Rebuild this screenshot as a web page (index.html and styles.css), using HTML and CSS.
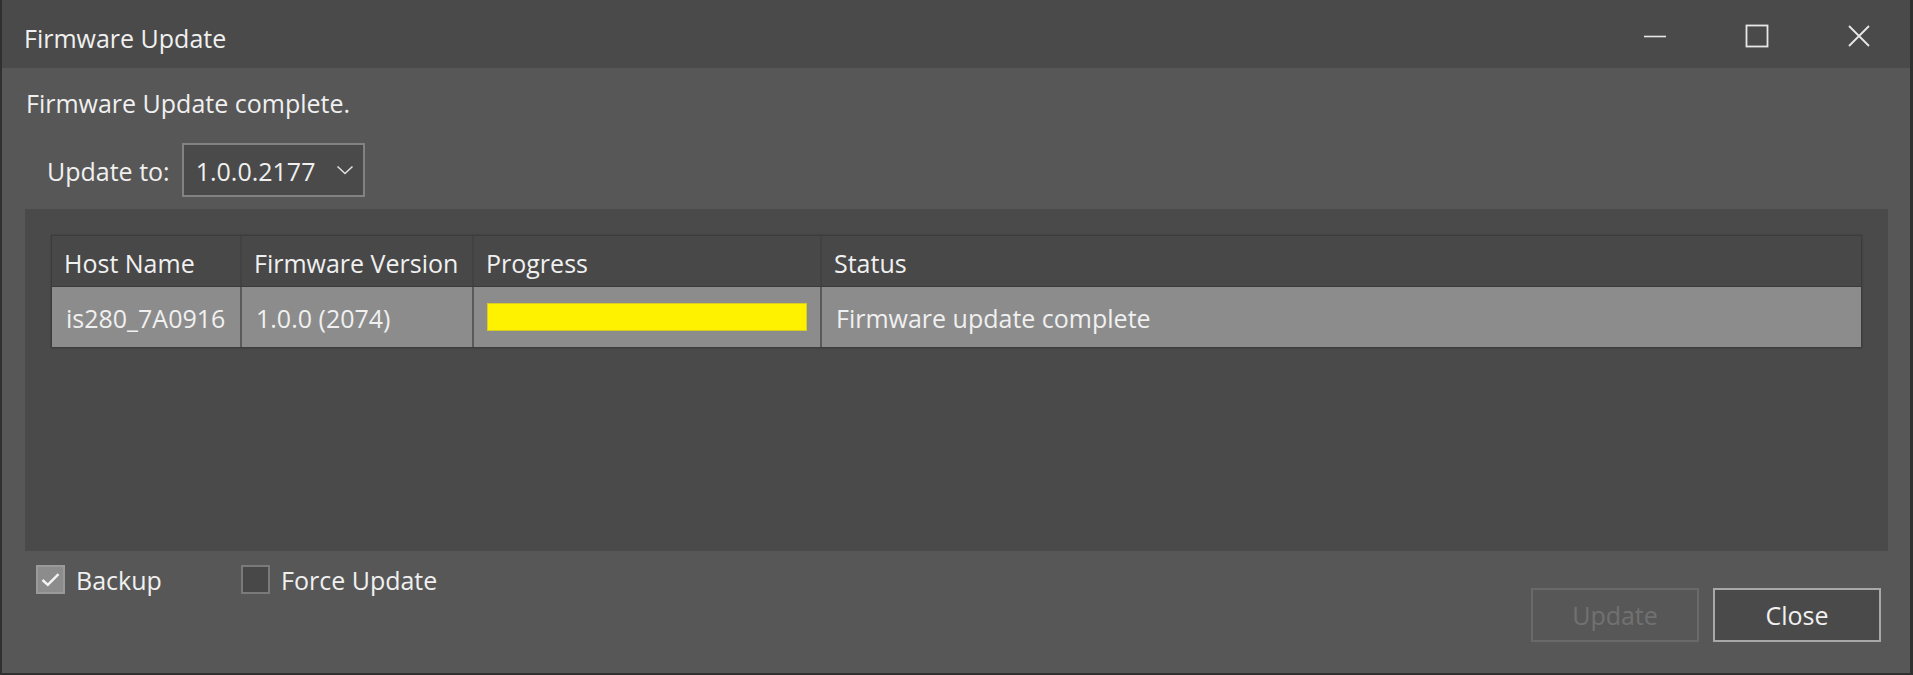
FILE: index.html
```html
<!DOCTYPE html>
<html>
<head>
<meta charset="utf-8">
<title>Firmware Update</title>
<link rel="stylesheet" href="styles.css">
</head>
<body>
<div class="window">
  <div class="titlebar">
    <div class="title">Firmware Update</div>
    <div class="controls">
      <div class="ctl"><svg width="24" height="24" viewBox="0 0 24 24"><line x1="1" y1="12.5" x2="23" y2="12.5" stroke="#e8e8e8" stroke-width="1.6"/></svg></div>
      <div class="ctl"><svg width="24" height="24" viewBox="0 0 24 24"><rect x="1.5" y="1.5" width="21" height="21" fill="none" stroke="#e8e8e8" stroke-width="1.8"/></svg></div>
      <div class="ctl"><svg width="24" height="24" viewBox="0 0 24 24"><path d="M2 2 L22 22 M22 2 L2 22" stroke="#e8e8e8" stroke-width="1.8"/></svg></div>
    </div>
  </div>
  <div class="content">
    <div class="message">Firmware Update complete.</div>
    <div class="update-row">
      <span class="label">Update to:</span>
      <div class="combo">
        <span>1.0.0.2177</span>
        <svg width="18" height="10" viewBox="0 0 18 10"><path d="M1.5 1.5 L9 8.5 L16.5 1.5" fill="none" stroke="#e0e0e0" stroke-width="1.6"/></svg>
      </div>
    </div>
    <div class="panel">
      <div class="grid">
        <div class="row head">
          <div class="cell c1">Host Name</div>
          <div class="cell c2">Firmware Version</div>
          <div class="cell c3">Progress</div>
          <div class="cell c4">Status</div>
        </div>
        <div class="row data">
          <div class="cell c1">is280_7A0916</div>
          <div class="cell c2">1.0.0 (2074)</div>
          <div class="cell c3"><div class="bar"><div class="fill" style="width:100%"></div></div></div>
          <div class="cell c4">Firmware update complete</div>
        </div>
      </div>
    </div>
    <div class="footer">
      <div class="checks">
        <label class="check"><span class="box checked"><svg width="19" height="15" viewBox="0 0 19 15"><path d="M1.5 8 L6.8 12.8 L17.5 2.2" fill="none" stroke="#f4f4f4" stroke-width="2.4"/></svg></span>Backup</label>
        <label class="check"><span class="box"></span>Force Update</label>
      </div>
      <div class="buttons">
        <div class="btn disabled">Update</div>
        <div class="btn primary">Close</div>
      </div>
    </div>
  </div>
</div>
</body>
</html>
```

FILE: styles.css
```css
* { box-sizing: border-box; }
html, body { margin: 0; padding: 0; }
body {
  background: #2d2d2d;
  font-family: "Open Sans", "Noto Sans", sans-serif;
  color: #f0f0f0;
  font-size: 25px;
  line-height: 34px;
}
.window {
  width: 1913px;
  height: 675px;
  background: #575757;
  border-left: 2px solid #303030;
  border-right: 3px solid #303030;
  border-bottom: 2px solid #303030;
  display: flex;
  flex-direction: column;
}
.titlebar {
  height: 68px;
  background: #4a4a4a;
  display: flex;
  align-items: center;
  justify-content: space-between;
  padding-left: 22px;
  flex-shrink: 0;
}
.title { padding-top: 7px; color: #f0f0f0; }
.controls { display: flex; height: 100%; padding-top: 3px; }
.ctl {
  width: 102px;
  height: 100%;
  display: flex;
  align-items: center;
  justify-content: center;
}
.content {
  padding: 0 22px 0 23px;
  display: flex;
  flex-direction: column;
  flex: 1;
}
.message {
  height: 62px;
  padding-top: 18px;
  padding-left: 1px;
}
.update-row {
  display: flex;
  align-items: center;
  padding-left: 22px;
  height: 79px;
  padding-top: 13px;
  padding-bottom: 12px;
}
.label { margin-right: 12px; padding-top: 2px; }
.combo {
  width: 183px;
  height: 54px;
  border: 2px solid #828282;
  background: #4a4a4a;
  display: flex;
  align-items: center;
  padding-left: 12px;
  padding-top: 2px;
  gap: 21px;
}
.combo svg { margin-top: -2px; }
.panel {
  background: #4a4a4a;
  height: 342px;
  padding: 26px 26px 0 26px;
}
.grid {
  border: 1px solid #3c3c3c;
  box-shadow: 0 0 2px rgba(0,0,0,0.25);
}
.row { display: flex; }
.row.head { height: 51px; background: #484848; border-bottom: 1px solid #3b3b3b; }
.row.data { height: 60px; background: #8c8c8c; }
.cell {
  display: flex;
  align-items: center;
  padding-left: 12px;
  border-right: 2px solid #424242;
  white-space: nowrap;
  overflow: hidden;
}
.row.head .cell { padding-top: 3px; }
.row.data .cell { border-right-color: #5a5a5a; padding-left: 14px; padding-top: 2px; }
.c1 { width: 190px; }
.c2 { width: 232px; }
.c3 { width: 348px; }
.c4 { flex: 1; border-right: none; }
.row.data .c4 { border-right: none; }
.row.data .c3 { padding-left: 13px; padding-right: 13px; padding-top: 0; }
.bar {
  width: 320px;
  height: 28px;
  background: #8c8c8c;
}
.fill {
  height: 100%;
  background: #fff200;
  border: 1px solid #d8cc20;
}
.footer {
  flex: 1;
  display: flex;
  justify-content: space-between;
  align-items: flex-start;
}
.checks {
  display: flex;
  padding-top: 14px;
  padding-left: 11px;
}
.check {
  display: flex;
  align-items: center;
  height: 29px;
}
.check:first-child { width: 205px; }
.box {
  width: 29px;
  height: 29px;
  border: 2px solid #7a7a7a;
  background: #484848;
  margin-right: 11px;
  display: flex;
  align-items: center;
  justify-content: center;
}
.box.checked { background: #8c8c8c; border-color: #9a9a9a; }
.buttons {
  display: flex;
  gap: 14px;
  padding-top: 37px;
  padding-right: 7px;
}
.btn {
  width: 168px;
  height: 54px;
  border: 2px solid #a8a8a8;
  display: flex;
  align-items: center;
  justify-content: center;
}
.btn.disabled { border-color: #696969; color: #717171; }
.btn.primary { background: #4a4a4a; }
```
